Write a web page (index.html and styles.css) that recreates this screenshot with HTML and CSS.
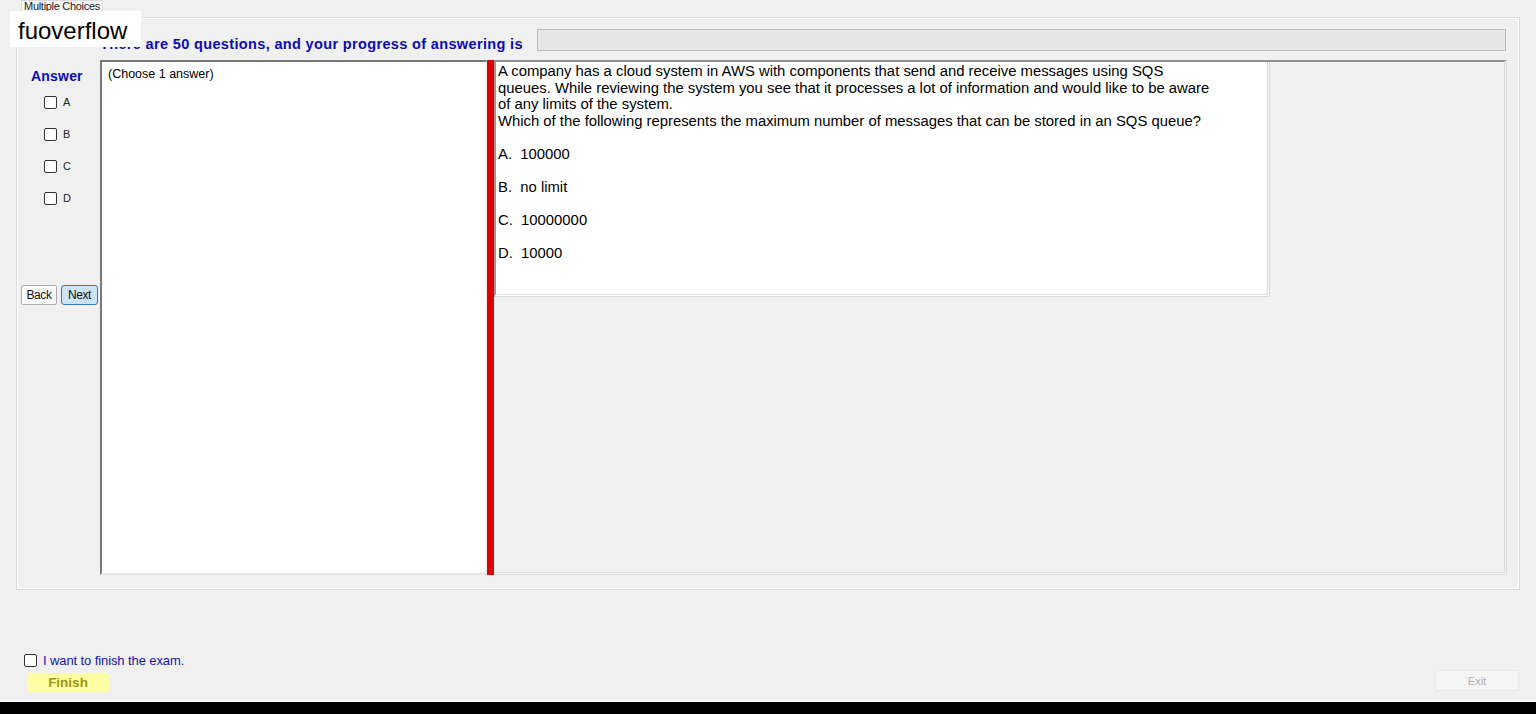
FILE: index.html
```html
<!DOCTYPE html>
<html>
<head>
    <title>Multiple Choices</title>
<link rel="stylesheet" href="styles.css">
</head>
<body>
    <div class="window">
        <div class="tab-strip">
            <div class="tab">Multiple Choices</div>
        </div>

        <div class="tab-page">
            <div class="head">
                <h1 class="progress-title">There are 50 questions, and your progress of answering is</h1>
                <div class="progress-bar"></div>
            </div>

            <div class="exam">
                <div class="answers">
                    <p class="answers-title">Answer</p>
                    <label class="choice"><input type="checkbox"> A</label>
                    <label class="choice"><input type="checkbox"> B</label>
                    <label class="choice"><input type="checkbox"> C</label>
                    <label class="choice"><input type="checkbox"> D</label>
                    <div class="nav">
                        <button class="btn">Back</button>
                        <button class="btn btn-active">Next</button>
                    </div>
                </div>

                <div class="choose-box">(Choose 1 answer)</div>
                <div class="splitter"></div>

                <div class="question-panel">
                    <div class="question">
                        <p class="question-text">A company has a cloud system in AWS with components that send and receive messages using SQS<br>queues. While reviewing the system you see that it processes a lot of information and would like to be aware<br>of any limits of the system.<br>Which of the following represents the maximum number of messages that can be stored in an SQS queue?</p>
                        <p class="option">A.&nbsp; 100000</p>
                        <p class="option">B.&nbsp; no limit</p>
                        <p class="option">C.&nbsp; 10000000</p>
                        <p class="option">D.&nbsp; 10000</p>
                    </div>
                </div>
            </div>
        </div>

        <div class="footer">
            <div class="finish-group">
                <label class="finish-check"><input type="checkbox"> I want to finish the exam.</label>
                <button class="btn-finish">Finish</button>
            </div>
            <button class="btn-exit" disabled>Exit</button>
        </div>
    </div>

    <div class="taskbar"></div>

    <div class="watermark">fuoverflow</div>
</body>
</html>
```

FILE: styles.css
```css
body {
    margin: 0;
    height: 714px;
    overflow: hidden;
    background-color: #f0f0f0;
    font-family: "Liberation Sans", Arial, sans-serif;
    color: #000;
    position: relative;
}

.window {
    height: 700px;
    display: flex;
    flex-direction: column;
    border-bottom: 2px solid #fafafa;
}

/* tab header */
.tab-strip {
    height: 17px;
    padding-left: 21px;
}

.tab {
    width: 82px;
    height: 16px;
    box-sizing: border-box;
    border: 1px solid #dadada;
    border-bottom: none;
    background-color: #f7f7f7;
    font-size: 11px;
    line-height: 10px;
    color: #222;
    text-align: center;
    overflow: hidden;
    letter-spacing: -0.3px;
}

.tab-page {
    margin: 0 16px;
    height: 573px;
    box-sizing: border-box;
    border: 1px solid #dcdcdc;
    box-shadow: inset 1px 1px 0 #fff, inset -1px -1px 0 #fff;
    display: flex;
    flex-direction: column;
}

.head {
    height: 42px;
    display: flex;
    align-items: flex-start;
    padding-left: 83px;
}

.progress-title {
    margin: 18px 0 0 0;
    font-size: 14.5px;
    font-weight: bold;
    color: #0a0ab8;
    white-space: nowrap;
    letter-spacing: 0.35px;
}

.progress-bar {
    margin: 11px 0 0 14px;
    width: 969px;
    height: 22px;
    box-sizing: border-box;
    border: 1px solid #bcbcbc;
    background-color: #e6e6e6;
}

.exam {
    height: 515px;
    display: flex;
}

/* left answer column */
.answers {
    width: 83px;
    display: flex;
    flex-direction: column;
}

.answers-title {
    margin: 8px 0 2px 14px;
    font-size: 14px;
    font-weight: bold;
    color: #0a0ab8;
    letter-spacing: 0.2px;
}

.choice {
    display: flex;
    align-items: center;
    height: 32px;
    padding-left: 27px;
    font-size: 11px;
    color: #222;
}

input[type="checkbox"] {
    appearance: none;
    width: 13px;
    height: 13px;
    margin: 0 6px 0 0;
    border: 1px solid #333;
    border-radius: 2px;
    background-color: #fff;
}

.nav {
    display: flex;
    gap: 4px;
    margin: 71px 0 0 4px;
}

.btn {
    width: 36px;
    height: 20px;
    padding: 0;
    border: 1px solid #adadad;
    border-radius: 2px;
    background-color: #fdfdfd;
    font-family: "Liberation Sans", Arial, sans-serif;
    font-size: 12px;
    color: #111;
    letter-spacing: -0.4px;
}

.btn-active {
    width: 37px;
    background-color: #cce4f7;
    border-color: #2f7bbd;
    border-radius: 3px;
}

.choose-box {
    width: 387px;
    box-sizing: border-box;
    border-top: 2px solid #7a7a7a;
    border-left: 2px solid #7a7a7a;
    border-right: 1px solid #e6e6e6;
    border-bottom: 2px solid #e6e6e6;
    background-color: #fff;
    padding: 5px 6px;
    font-size: 12.5px;
}

.splitter {
    width: 6px;
    background-color: #e00000;
    border-right: 1px solid #8a2a2a;
}

/* question area */
.question-panel {
    flex: 1;
    border-top: 2px solid #8f8f8f;
    border-right: 3px double #dcdcdc;
    border-bottom: 3px double #e2e2e2;
    margin-right: 12px;
}

.question {
    width: 776px;
    height: 235px;
    box-sizing: border-box;
    background-color: #fff;
    border-left: 2px solid #9a9a9a;
    border-right: 3px double #d6d6d6;
    border-bottom: 3px double #dedede;
    padding: 1px 0 0 2px;
    font-size: 14.85px;
}

.question-text {
    margin: 0 0 9px 0;
    line-height: 16.5px;
}

.option {
    margin: 0;
    line-height: 33px;
}

/* bottom controls */
.footer {
    flex: 1;
    display: flex;
    justify-content: space-between;
    align-items: flex-end;
    padding: 0 17px 8px 24px;
}

.finish-group {
    display: flex;
    flex-direction: column;
    gap: 5px;
}

.finish-check {
    display: flex;
    align-items: center;
    font-size: 13px;
    color: #1616a8;
    letter-spacing: -0.1px;
}

.finish-check input {
    margin-right: 6px;
}

.btn-finish {
    margin-left: 3px;
    width: 82px;
    height: 19px;
    border: none;
    border-radius: 3px;
    background-color: #fdfda3;
    font-family: "Liberation Sans", Arial, sans-serif;
    font-size: 13.5px;
    font-weight: bold;
    color: #9a9a12;
    padding-right: 6px;
}

.btn-exit {
    width: 84px;
    height: 21px;
    margin-bottom: 1px;
    border: 1px solid #e8e8e8;
    background-color: #f5f5f5;
    font-family: "Liberation Sans", Arial, sans-serif;
    font-size: 11px;
    color: #b0b0b0;
}

.taskbar {
    height: 12px;
    background-color: #000;
}

.watermark {
    position: absolute;
    left: 10px;
    top: 11px;
    width: 131px;
    height: 36px;
    box-sizing: border-box;
    padding: 6px 0 0 8px;
    background-color: #fff;
    font-size: 24px;
}
```
